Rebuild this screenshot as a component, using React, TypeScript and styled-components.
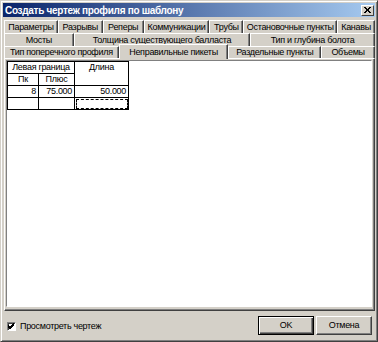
import React from 'react';
import styled, { createGlobalStyle } from 'styled-components';

const Global = createGlobalStyle`
    html, body {
        margin: 0;
        padding: 0;
        background: #d4d0c8;
    }
    body {
        font-family: 'Liberation Sans', Arial, sans-serif;
        font-size: 9px;
        letter-spacing: -0.3px;
        color: #000;
    }
`;

const Window = styled.div`
    width: 378px;
    height: 342px;
    box-sizing: border-box;
    background: #d4d0c8;
    border: 1px solid;
    border-color: #d4d0c8 #404040 #404040 #d4d0c8;
    box-shadow: inset 1px 1px 0 #fff, inset -1px -1px 0 #808080;
    display: flex;
    flex-direction: column;
    padding: 2px;
`;

const TitleBar = styled.div`
    height: 14px;
    flex: none;
    display: flex;
    align-items: center;
    justify-content: space-between;
    padding: 0 1px 0 2px;
    background: linear-gradient(to right, #0a246a, #a6caf0);
    color: #fff;
    font-weight: bold;
    font-size: 10px;
    letter-spacing: -0.3px;
`;

const CloseButton = styled.div`
    width: 13px;
    height: 11px;
    box-sizing: border-box;
    background: #d4d0c8;
    border: 1px solid;
    border-color: #fff #404040 #404040 #fff;
    display: flex;
    align-items: center;
    justify-content: center;
`;

const Tabs = styled.div`
    display: flex;
    flex-direction: column;
    margin-top: 3px;
    padding: 0 0 0 1px;
`;

const TabRow = styled.div<{ $h: number }>`
    display: flex;
    height: ${(p) => p.$h}px;
`;

const Tab = styled.div<{ $w: number; $active?: boolean }>`
    width: ${(p) => p.$w}px;
    box-sizing: border-box;
    height: ${(p) => (p.$active ? 'calc(100% + 3px)' : '100%')};
    margin-top: ${(p) => (p.$active ? -2 : 0)}px;
    position: relative;
    z-index: ${(p) => (p.$active ? 2 : 1)};
    background: #d4d0c8;
    border-top: 1px solid #fff;
    border-left: 1px solid #fff;
    border-right: 1px solid #404040;
    box-shadow: inset -1px 0 0 #808080;
    display: flex;
    align-items: ${(p) => (p.$active ? 'flex-start' : 'center')};
    padding-top: ${(p) => (p.$active ? 2 : 0)}px;
    justify-content: center;
    white-space: nowrap;
    line-height: 11px;
`;

const Panel = styled.div`
    flex: 1;
    margin-left: 1px;
    box-sizing: border-box;
    border: 1px solid;
    border-color: #fff #404040 #404040 #fff;
    box-shadow: inset -1px -1px 0 #808080;
    padding: 1px 2px 3px 1px;
    display: flex;
`;

const GridArea = styled.div`
    flex: 1;
    background: #fff;
    border: 1px solid;
    border-color: #808080 #fff #fff #808080;
`;

const Table = styled.table`
    border-collapse: collapse;
    table-layout: fixed;
    margin: 0 0 0 0;
    td {
        border: 1px solid #000;
        height: 11px;
        padding: 0 2px;
        line-height: 11px;
        white-space: nowrap;
        overflow: hidden;
    }
`;

const HeadCell = styled.td`
    text-align: center;
    vertical-align: top;
`;

const NumCell = styled.td<{ $focus?: boolean }>`
    text-align: right;
    ${(p) => (p.$focus ? 'outline: 1px dashed #000; outline-offset: -2px;' : '')}
`;

const Footer = styled.div`
    flex: none;
    height: 28px;
    display: flex;
    align-items: center;
    justify-content: space-between;
    padding: 0 3px 0 4px;
`;

const CheckLabel = styled.label`
    display: flex;
    align-items: center;
    gap: 4px;
    margin-top: 2px;
`;

const CheckBox = styled.span`
    width: 9px;
    height: 9px;
    box-sizing: border-box;
    background: #fff;
    border: 1px solid;
    border-color: #808080 #fff #fff #808080;
    box-shadow: inset 1px 1px 0 #404040;
    display: flex;
    align-items: center;
    justify-content: center;
`;

const Buttons = styled.div`
    display: flex;
    gap: 2px;
`;

const Button = styled.div<{ $default?: boolean }>`
    width: 56px;
    height: 19px;
    box-sizing: border-box;
    background: #d4d0c8;
    border: 1px solid;
    border-color: ${(p) => (p.$default ? '#000' : '#fff #404040 #404040 #fff')};
    box-shadow: ${(p) =>
        p.$default
            ? 'inset 1px 1px 0 #fff, inset -1px -1px 0 #404040, inset -2px -2px 0 #808080'
            : 'inset -1px -1px 0 #808080'};
    display: flex;
    align-items: center;
    justify-content: center;
`;

const rows: { h: number; tabs: { label: string; w: number; active?: boolean }[] }[] = [
    {
        h: 13,
        tabs: [
            { label: 'Параметры', w: 54 },
            { label: 'Разрывы', w: 45 },
            { label: 'Реперы', w: 41 },
            { label: 'Коммуникации', w: 66 },
            { label: 'Трубы', w: 34 },
            { label: 'Остановочные пункты', w: 94 },
            { label: 'Канавы', w: 38 },
        ],
    },
    {
        h: 13,
        tabs: [
            { label: 'Мосты', w: 70 },
            { label: 'Толщина существующего балласта', w: 177 },
            { label: 'Тип и глубина болота', w: 125 },
        ],
    },
    {
        h: 12,
        tabs: [
            { label: 'Тип поперечного профиля', w: 115 },
            { label: 'Неправильные пикеты', w: 110, active: true },
            { label: 'Раздельные пункты', w: 93 },
            { label: 'Объемы', w: 54 },
        ],
    },
];

export default function App() {
    return (
        <>
            <Global />
            <Window>
                <TitleBar>
                    <span>Создать чертеж профиля по шаблону</span>
                    <CloseButton>
                        <svg width="7" height="6" viewBox="0 0 7 6">
                            <path d="M0 0L6 6M1 0L7 6M6 0L0 6M7 0L1 6" stroke="#000" strokeWidth="1" />
                        </svg>
                    </CloseButton>
                </TitleBar>
                <Tabs>
                    {rows.map((r, i) => (
                        <TabRow key={i} $h={r.h}>
                            {r.tabs.map((t) => (
                                <Tab key={t.label} $w={t.w} $active={t.active}>
                                    {t.label}
                                </Tab>
                            ))}
                        </TabRow>
                    ))}
                </Tabs>
                <Panel>
                    <GridArea>
                        <Table>
                            <colgroup>
                                <col style={{ width: 31 }} />
                                <col style={{ width: 36 }} />
                                <col style={{ width: 54 }} />
                            </colgroup>
                            <tbody>
                                <tr>
                                    <HeadCell colSpan={2}>Левая граница</HeadCell>
                                    <HeadCell rowSpan={2}>Длина</HeadCell>
                                </tr>
                                <tr>
                                    <HeadCell>Пк</HeadCell>
                                    <HeadCell>Плюс</HeadCell>
                                </tr>
                                <tr>
                                    <NumCell>8</NumCell>
                                    <NumCell>75.000</NumCell>
                                    <NumCell>50.000</NumCell>
                                </tr>
                                <tr>
                                    <NumCell />
                                    <NumCell />
                                    <NumCell $focus />
                                </tr>
                            </tbody>
                        </Table>
                    </GridArea>
                </Panel>
                <Footer>
                    <CheckLabel>
                        <CheckBox>
                            <svg width="7" height="7" viewBox="0 0 7 7">
                                <path d="M0 2L2 4L6 0M0 3L2 5L6 1M0 4L2 6L6 2" stroke="#000" fill="none" />
                            </svg>
                        </CheckBox>
                        Просмотреть чертеж
                    </CheckLabel>
                    <Buttons>
                        <Button $default>OK</Button>
                        <Button>Отмена</Button>
                    </Buttons>
                </Footer>
            </Window>
        </>
    );
}
